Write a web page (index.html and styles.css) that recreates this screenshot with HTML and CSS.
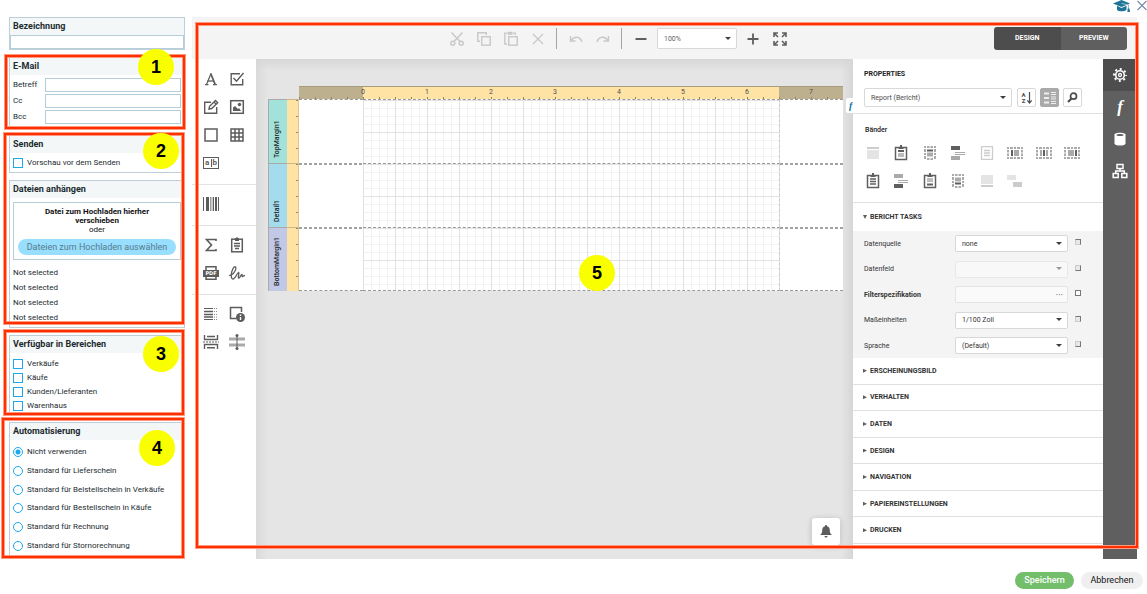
FILE: index.html
```html
<!DOCTYPE html>
<html lang="de">
<head>
<meta charset="utf-8">
<title>Berichtsdesigner</title>
<link rel="stylesheet" href="styles.css">
</head>
<body>
<header class="topbar">
  <button class="icon-btn help" aria-label="Hilfe"><svg width="18" height="13" viewBox="0 0 18 13"><path d="M0 3.500L8.500 0 17 3.500 8.500 7z" fill="#1f7396"/><path d="M4 5.800v4c1.500 2 7.500 2 9.500 0v-4L8.500 8z" fill="#1f7396"/><path d="M8.500 3.500l7 1.300V10" stroke="#8fc0d2" fill="none"/><path d="M14.700 8.500h1.800l.5 3.500h-2.600z" fill="#1f7396"/></svg></button>
  <button class="icon-btn" aria-label="Schließen"><svg width="10" height="11" viewBox="0 0 10 11"><path d="M.5 1l9 9M9.500 1l-9 9" stroke="#7890ad" stroke-width="1.200"/></svg></button>
</header>

<main class="main">
  <form class="sidebar">
    <section class="card">
      <h2><label for="name">Bezeichnung</label></h2>
      <input class="text-input" id="name" type="text">
    </section>

    <div class="group group-mail">
      <section class="card">
        <h2>E-Mail</h2>
        <div class="mail-fields">
          <label for="subject">Betreff</label><input class="text-input" id="subject" type="text">
          <label for="cc">Cc</label><input class="text-input" id="cc" type="text">
          <label for="bcc">Bcc</label><input class="text-input" id="bcc" type="text">
        </div>
      </section>
      <div class="mark"></div><span class="badge">1</span>
    </div>

    <div class="group group-send">
      <section class="card">
        <h2>Senden</h2>
        <div class="send-body"><label class="option"><input type="checkbox">Vorschau vor dem Senden</label></div>
      </section>
      <section class="card">
        <h2>Dateien anhängen</h2>
        <div class="files">
          <div class="dropzone">
            <strong>Datei zum Hochladen hierher verschieben</strong>
            <span>oder</span>
            <button type="button" class="upload">Dateien zum Hochladen auswählen</button>
          </div>
          <ul class="file-list"><li>Not selected</li><li>Not selected</li><li>Not selected</li><li>Not selected</li></ul>
        </div>
      </section>
      <div class="mark"></div><span class="badge">2</span>
    </div>

    <div class="group group-areas">
      <section class="card">
        <h2>Verfügbar in Bereichen</h2>
        <div class="areas">
          <label class="option"><input type="checkbox">Verkäufe</label>
          <label class="option"><input type="checkbox">Käufe</label>
          <label class="option"><input type="checkbox">Kunden/Lieferanten</label>
          <label class="option"><input type="checkbox">Warenhaus</label>
        </div>
      </section>
      <div class="mark"></div><span class="badge">3</span>
    </div>

    <div class="group group-auto">
      <section class="card">
        <h2>Automatisierung</h2>
        <div class="automation">
          <label class="option"><input type="radio" name="auto" checked>Nicht verwenden</label>
          <label class="option"><input type="radio" name="auto">Standard für Lieferschein</label>
          <label class="option"><input type="radio" name="auto">Standard für Belstellschein in Verkäufe</label>
          <label class="option"><input type="radio" name="auto">Standard für Bestellschein in Käufe</label>
          <label class="option"><input type="radio" name="auto">Standard für Rechnung</label>
          <label class="option"><input type="radio" name="auto">Standard für Stornorechnung</label>
        </div>
      </section>
      <div class="mark"></div><span class="badge">4</span>
    </div>
  </form>

  <section class="designer">
    <div class="toolbar">
      <div class="tools">
        <button class="icon-btn" aria-label="Ausschneiden"><svg width="14" height="14" viewBox="0 0 14 14" fill="none" stroke="currentColor" stroke-width="1.500"><path d="M1.500.5l8.500 9M12.500.5L4 9.500"/><circle cx="2.800" cy="11.200" r="2"/><circle cx="11.200" cy="11.200" r="2"/></svg></button>
        <button class="icon-btn" aria-label="Kopieren"><svg width="14" height="14" viewBox="0 0 14 14" fill="none" stroke="currentColor" stroke-width="1.400"><path d="M3 9.300H.8V.8h8.500V3"/><rect x="4.700" y="4.700" width="8.500" height="8.500"/></svg></button>
        <button class="icon-btn" aria-label="Einfügen"><svg width="14" height="15" viewBox="0 0 14 15" fill="none" stroke="currentColor" stroke-width="1.400"><path d="M3 13H.8V2.300h2M9 2.300h2.200V4"/><path d="M3.500 2.300h5" stroke-width="3"/><rect x="4.700" y="5.700" width="8.500" height="8.500"/></svg></button>
        <button class="icon-btn" aria-label="Löschen"><svg width="14" height="14" viewBox="0 0 14 14"><path d="M2 2l10 10M12 2L2 12" stroke="currentColor" stroke-width="1.300"/></svg></button>
      </div>
      <span class="sep"></span>
      <div class="tools">
        <button class="icon-btn" aria-label="Rückgängig"><svg width="14" height="14" viewBox="0 0 14 14" fill="none" stroke="currentColor" stroke-width="1.400"><path d="M1.500 4v5h5M2 8.500c3-4.500 9-4.500 11 1.500"/></svg></button>
        <button class="icon-btn" aria-label="Wiederholen"><svg width="14" height="14" viewBox="0 0 14 14" fill="none" stroke="currentColor" stroke-width="1.400"><path d="M12.500 4v5h-5M12 8.500c-3-4.500-9-4.500-11 1.500"/></svg></button>
      </div>
      <span class="sep"></span>
      <div class="zoom">
        <button class="icon-btn" aria-label="Verkleinern"><svg width="14" height="14" viewBox="0 0 14 14"><path d="M1.500 7h11" stroke="currentColor" stroke-width="2"/></svg></button>
        <span class="select zoom-select"><select aria-label="Zoom"><option>100%</option></select></span>
        <button class="icon-btn" aria-label="Vergrößern"><svg width="14" height="14" viewBox="0 0 14 14"><path d="M1.500 7h11M7 1.500v11" stroke="currentColor" stroke-width="1.800"/></svg></button>
      </div>
      <button class="icon-btn" aria-label="Vollbild"><svg width="14" height="14" viewBox="0 0 14 14" fill="none" stroke="currentColor" stroke-width="1.600"><path d="M1 5V1h4M9 1h4v4M13 9v4H9M5 13H1V9M1 1l4 4M13 1L9 5M13 13L9 9M1 13l4-4"/></svg></button>
      <div class="modes"><button class="active">DESIGN</button><button>PREVIEW</button></div>
    </div>

    <div class="workspace">
      <div class="toolbox">
        <div class="tool-group">
          <button class="icon-btn" aria-label="Text"><svg width="16" height="16" viewBox="0 0 16 16" fill="none" stroke="currentColor"><path d="M4.500 10h6.500" stroke-width="1.300"/><path d="M3.500 13.500L8 2.500" stroke-width="1.200"/><path d="M7.700 2.500l4.500 11" stroke-width="1.800"/><path d="M2 13.600h3.500M10 13.600h4" stroke-width="1.200"/></svg></button>
          <button class="icon-btn" aria-label="Kontrollkästchen"><svg width="16" height="16" viewBox="0 0 16 16" fill="none" stroke="currentColor" stroke-width="1.400"><path d="M11 2.700H2.200v11h11.500V8M4.500 7l3 3.300L14.500 2"/></svg></button>
          <button class="icon-btn" aria-label="Rich Text"><svg width="16" height="16" viewBox="0 0 16 16" fill="none" stroke="currentColor" stroke-width="1.400"><path d="M8 3.200H1.700v11h12V8"/><path d="M6 10l.6-2.700L12.500 1.500l2.200 2.200L8.700 9.500z M11 3l2.200 2.200"/></svg></button>
          <button class="icon-btn" aria-label="Bild"><svg width="16" height="16" viewBox="0 0 16 16"><rect x="1.700" y="1.700" width="12.600" height="12.600" fill="none" stroke="currentColor" stroke-width="1.500"/><path d="M4 12V8.500l2-1.500 3 3 1-1 2 3z" fill="currentColor"/><circle cx="10.500" cy="5.500" r="1.700" fill="currentColor"/></svg></button>
          <button class="icon-btn" aria-label="Panel"><svg width="16" height="16" viewBox="0 0 16 16"><rect x="2" y="2" width="12" height="12" fill="none" stroke="currentColor" stroke-width="1.500"/></svg></button>
          <button class="icon-btn" aria-label="Tabelle"><svg width="16" height="16" viewBox="0 0 16 16" fill="none" stroke="currentColor" stroke-width="1.500"><path d="M2 2h12v12H2zM6 2v12M10 2v12M2 6h12M2 10h12"/></svg></button>
          <button class="icon-btn comb" aria-label="Zeichenkamm"><span>a</span><span>b</span></button>
        </div>
        <div class="tool-group">
          <button class="icon-btn" aria-label="Barcode"><svg width="16" height="16" viewBox="0 0 16 16" fill="currentColor"><path d="M0 1h1v14H0zM3 1h3v14H3zM10 1h1v14h-1zM12 1h2v14h-2zM15 1h1v14h-1z"/><path d="M7 1h1v14H7zM8.500 1h1v14h-1z" opacity=".6"/></svg></button>
        </div>
        <div class="tool-group">
          <button class="icon-btn" aria-label="Summe"><svg width="16" height="16" viewBox="0 0 16 16" fill="none" stroke="currentColor" stroke-width="1.600"><path d="M13 4V2.500H3.500L8.500 8l-5 5.500H13V12"/></svg></button>
          <button class="icon-btn" aria-label="Unterbericht"><svg width="16" height="16" viewBox="0 0 16 16" fill="none" stroke="currentColor" stroke-width="1.500"><rect x="2.700" y="2.200" width="10.600" height="12.600"/><path d="M6 2.500h4M7.500 1h1" stroke-width="3"/><path d="M5 6.500h6M5 9h6M6 11.500h4"/></svg></button>
          <button class="icon-btn pdf" aria-label="PDF"><svg width="16" height="16" viewBox="0 0 16 16"><path d="M3 5V1.700h10V5M3 11v3.300h10V11" fill="none" stroke="currentColor" stroke-width="1.500"/></svg><span>PDF</span></button>
          <button class="icon-btn" aria-label="Signatur"><svg width="16" height="16" viewBox="0 0 16 16" fill="none" stroke="currentColor" stroke-width="1.300" stroke-linecap="round"><path d="M.7 10.500C4 10.500 8 4 6.500 2 5 .5 2.500 5.500 2.300 10c-.1 3 .7 4.300 2 4 2.500-.6 3.500-6 5.200-6.500 1.200-.2-1 5.500.2 5.700 1.300.2 2.300-4 3.200-3.800.7.300-.2 2.300.6 2.300.8 0 1.200-1.200 2-1.200"/></svg></button>
        </div>
        <div class="tool-group">
          <button class="icon-btn" aria-label="Inhaltsverzeichnis"><svg width="16" height="16" viewBox="0 0 16 16" fill="none" stroke="currentColor" stroke-width="1"><path d="M1 2.500h9M1 13.500h9"/><path d="M1 5.500h9M1 8.500h9M1 11h9" stroke-width="1.500"/><path d="M11 2.500h4M11 5.500h4M11 8.500h4M11 11h4M11 13.500h4" stroke-dasharray="1 1" opacity=".7"/></svg></button>
          <button class="icon-btn" aria-label="Seiteninfo"><svg width="16" height="16" viewBox="0 0 16 16"><path d="M7 12.500H1.500V1.500h11V6" fill="none" stroke="currentColor" stroke-width="1.500"/><circle cx="11.500" cy="11.500" r="4.500" fill="currentColor"/><path d="M11.500 8.500v1.500M11.500 11v3" stroke="#fff" stroke-width="1.400"/></svg></button>
          <button class="icon-btn" aria-label="Seitenumbruch"><svg width="16" height="16" viewBox="0 0 16 16" fill="none" stroke="currentColor" stroke-width="1.400"><path d="M1.500 1v4.500h13V1M4 2.500h8M1.500 15v-4.500h13V15M4 13.700h8"/><path d="M0 8h16" stroke-dasharray="2 1" stroke-width="1"/></svg></button>
          <button class="icon-btn" aria-label="Bandübergreifende Linie"><svg width="16" height="16" viewBox="0 0 16 16"><path d="M0 3.500h16v3H0zM0 9.500h16v3H0z" fill="#aaa"/><path d="M8 2v12" stroke="currentColor"/><circle cx="8" cy="1.500" r="1.500" fill="currentColor"/><circle cx="8" cy="14.500" r="1.500" fill="currentColor"/></svg></button>
        </div>
      </div>

      <div class="canvas">
        <div class="ruler">
          <div class="ruler-part outside"></div>
          <div class="ruler-part inside"><span>0</span><span>1</span><span>2</span><span>3</span><span>4</span><span>5</span><span>6</span></div>
          <div class="ruler-part outside rest"><span>7</span></div>
        </div>
        <div class="band top"><div class="band-name">TopMargin1</div><div class="band-ruler"></div><div class="page-margin"></div><div class="page-grid"></div><div class="page-rest"></div></div>
        <div class="band detail"><div class="band-name">Detail1</div><div class="band-ruler"></div><div class="page-margin"></div><div class="page-grid"></div><div class="page-rest"></div></div>
        <div class="band bottom"><div class="band-name">BottomMargin1</div><div class="band-ruler"></div><div class="page-margin"></div><div class="page-grid"></div><div class="page-rest"></div></div>
        <button class="fx" aria-label="Ausdruck">f</button>
        <button class="bell" aria-label="Benachrichtigungen"><svg width="12" height="13" viewBox="0 0 12 13" fill="#5c5c5c"><path d="M6 0c.8 0 1 .6 1 1.200 2 .5 2.800 2 2.800 4C9.800 7.500 10.300 8.500 12 10H0c1.700-1.500 2.200-2.500 2.200-4.800 0-2 .8-3.500 2.800-4C5 .6 5.200 0 6 0zM4.500 11h3c0 2-3 2-3 0z"/></svg></button>
      </div>

      <aside class="props">
        <div class="props-head">
          <h3>PROPERTIES</h3>
          <div class="props-tools">
            <span class="select object-select"><select aria-label="Element"><option>Report (Bericht)</option></select></span>
            <button class="square az" aria-label="Sortieren"><span>A<br>Z</span><svg width="5" height="12" viewBox="0 0 5 12" fill="none" stroke="currentColor"><path d="M2.500 0v11M.3 8.500l2.200 2.500 2.200-2.500" stroke-width="1.200"/></svg></button>
            <button class="square pressed" aria-label="Kategorien"><svg width="12" height="12" viewBox="0 0 12 12" fill="none" stroke="#eee"><path d="M0 1.500h5M0 6h5M0 10.500h5" stroke-width="2"/><path d="M7 .5h5M7 2.500h5M7 5h5M7 7h5M7 9.500h5M7 11.500h5"/></svg></button>
            <button class="square" aria-label="Suchen"><svg width="11" height="11" viewBox="0 0 11 11" fill="none" stroke="currentColor"><circle cx="6.500" cy="4.200" r="3" stroke-width="1.700"/><path d="M4.500 6.500l-3.500 3.500" stroke-width="2.200"/></svg></button>
          </div>
        </div>
        <div class="bands">
          <h4>Bänder</h4>
          <div class="band-icons">
            <svg viewBox="0 0 16 16"><path d="M2 2h12v2H2z" fill="#ccc"/><path d="M2 5h12v9H2z" fill="#e4e4e4"/></svg>
            <svg viewBox="0 0 16 16"><use href="#clip"/><path d="M5 5h6v2H5z" fill="#5f5f5f"/><path d="M5 8h6v4H5z" fill="#bbb"/></svg>
            <svg viewBox="0 0 16 16"><use href="#vband"/><path d="M5 4.500h6v2H5z" fill="#5f5f5f"/><path d="M5 7.500h6v4H5z" fill="#aaa"/></svg>
            <svg viewBox="0 0 16 16"><path d="M1 1h9v4H1z" fill="#5f5f5f"/><path d="M5 7h10v1H5zM5 9h10v1H5z" fill="#aaa"/><path d="M1 11h9v4H1z" fill="#aaa"/></svg>
            <svg viewBox="0 0 16 16" fill="none" stroke="#ccc" stroke-width="1.300"><path d="M2.500 1.700h11v12.600h-11zM5 5.500h6M5 8h6M5 10.500h6"/></svg>
            <svg viewBox="0 0 16 16"><use href="#hband"/><path d="M4 5h2v6H4z" fill="#5f5f5f"/><path d="M7 5h5v6H7z" fill="#aaa"/></svg>
            <svg viewBox="0 0 16 16"><use href="#hband"/><path d="M7 5h2v6H7z" fill="#5f5f5f"/><path d="M4 5h2v6H4zM10 5h2v6h-2z" fill="#aaa"/></svg>
            <svg viewBox="0 0 16 16"><use href="#hband"/><path d="M11 5h2v6h-2z" fill="#5f5f5f"/><path d="M4 5h6v6H4z" fill="#aaa"/></svg>
            <svg viewBox="0 0 16 16"><use href="#clip"/><path d="M5 6h6M5 8.500h6M5 11h6" stroke="#5f5f5f" stroke-width="1.300"/></svg>
            <svg viewBox="0 0 16 16"><path d="M1 1h9v4H1z" fill="#aaa"/><path d="M5 7h10v1H5zM5 9h10v1H5z" fill="#aaa"/><path d="M1 11h9v4H1z" fill="#5f5f5f"/></svg>
            <svg viewBox="0 0 16 16"><use href="#clip"/><path d="M5 5h6v4H5z" fill="#bbb"/><path d="M5 10.500h6v2H5z" fill="#5f5f5f"/></svg>
            <svg viewBox="0 0 16 16"><use href="#vband"/><path d="M5 9.500h6v2H5z" fill="#5f5f5f"/><path d="M5 4.500h6v4H5z" fill="#aaa"/></svg>
            <svg viewBox="0 0 16 16"><path d="M2 12h12v2H2z" fill="#ccc"/><path d="M2 2h12v9H2z" fill="#e4e4e4"/></svg>
            <svg viewBox="0 0 16 16"><path d="M0 2h9v5H0z" fill="#e4e4e4"/><path d="M6 9h9v5H6z" fill="#ccc"/></svg>
          </div>
          <svg class="defs" width="0" height="0"><defs>
            <g id="clip"><path d="M2.500 2.500h11v12h-11z" fill="none" stroke="#5f5f5f" stroke-width="1.500"/><path d="M5.500 3h5M7 1h2" stroke="#5f5f5f" stroke-width="2"/></g>
            <g id="vband" fill="none" stroke="#aaa" stroke-width="2"><path d="M3 1v14M13 1v14" stroke-dasharray="2 1 3 1"/><path d="M5 2h6M5 14h6" stroke-dasharray="2.500 1"/></g>
            <g id="hband" fill="none" stroke="#aaa" stroke-width="2"><path d="M0 3h16M0 13h16" stroke-dasharray="2 1 3 1"/><path d="M1 5v6M15 5v6" stroke-dasharray="2.500 1"/></g>
          </defs></svg>
        </div>
        <button class="acc-title open">BERICHT TASKS</button>
        <div class="tasks">
          <div class="task"><label for="src">Datenquelle</label><span class="select"><select id="src"><option>none</option></select></span><button class="mini" aria-label="Optionen"></button></div>
          <div class="task"><label for="fld">Datenfeld</label><span class="select off"><select id="fld" disabled></select></span><button class="mini" aria-label="Optionen"></button></div>
          <div class="task"><label class="strong" for="flt">Filterspezifikation</label><span class="more"><input id="flt" disabled><button aria-label="Mehr">···</button></span><button class="mini" aria-label="Optionen"></button></div>
          <div class="task"><label for="unit">Maßeinheiten</label><span class="select"><select id="unit"><option>1/100 Zoll</option></select></span><button class="mini" aria-label="Optionen"></button></div>
          <div class="task"><label for="lang">Sprache</label><span class="select"><select id="lang"><option>(Default)</option></select></span><button class="mini" aria-label="Optionen"></button></div>
        </div>
        <div class="accordion">
          <button class="acc-title">ERSCHEINUNGSBILD</button>
          <button class="acc-title">VERHALTEN</button>
          <button class="acc-title">DATEN</button>
          <button class="acc-title">DESIGN</button>
          <button class="acc-title">NAVIGATION</button>
          <button class="acc-title">PAPIEREINSTELLUNGEN</button>
          <button class="acc-title">DRUCKEN</button>
        </div>
      </aside>

      <nav class="rail">
        <button class="active" aria-label="Eigenschaften"><svg width="14" height="14" viewBox="0 0 14 14" fill="none" stroke="#fff"><circle cx="7" cy="7" r="4.300" stroke-width="1.600"/><circle cx="7" cy="7" r="1.500" stroke-width="1.300"/><circle cx="7" cy="7" r="6" stroke-width="2" stroke-dasharray="2 2.712" stroke-dashoffset="1"/></svg></button>
        <button class="func" aria-label="Ausdrücke">f</button>
        <button aria-label="Felder"><svg width="12" height="14" viewBox="0 0 12 14"><path d="M.5 2.500C.5 0 11.500 0 11.500 2.500v9c0 2.700-11 2.700-11 0z" fill="#fff"/><ellipse cx="6" cy="3" rx="3.500" ry="1" fill="#5f5f5f"/></svg></button>
        <button aria-label="Berichtsexplorer"><svg width="16" height="16" viewBox="0 0 16 16" fill="none" stroke="#fff" stroke-width="1.500"><path d="M5 1.500h6v4H5zM1.200 10.500h5v4h-5zM9.800 10.500h5v4h-5zM8 5.500V8M3.700 10.500V8h8.600v2.500"/></svg></button>
      </nav>
    </div>
    <div class="mark"></div><span class="badge">5</span>
  </section>
</main>

<footer class="actions"><button class="save">Speichern</button><button class="cancel">Abbrechen</button></footer>
</body>
</html>
```
FILE: styles.css
```css
* { box-sizing: border-box; }
body {
  margin: 0;
  min-height: 100vh;
  display: flex;
  flex-direction: column;
  background: #fff;
  color: #1c2b2f;
  font: 8px/10px Roboto, "Liberation Sans", sans-serif;
}
button, input, select { font: inherit; color: inherit; margin: 0; }
button { border: 0; padding: 0; background: none; cursor: pointer; }
h2, h3, h4, ul { margin: 0; padding: 0; list-style: none; }
svg { display: block; }
.icon-btn { display: flex; align-items: center; justify-content: center; }

.topbar { height: 17px; display: flex; justify-content: flex-end; align-items: flex-start; gap: 6px; }
.main { flex: 1; display: flex; gap: 7px; padding: 0 10px 0 9px; }

/* Sidebar */
.sidebar { flex: none; width: 176px; display: flex; flex-direction: column; gap: 7px; }
.group { position: relative; display: flex; flex-direction: column; gap: 7px; }
.card { border: 1px solid #bdd0da; }
.card h2 { height: 17px; padding-left: 3px; background: #f3f7f8; font-size: 9px; line-height: 17px; font-weight: 700; }
.text-input { display: block; width: 100%; height: 14px; padding: 0 3px; border: 1px solid #b5ced8; background: #fff; }
.mail-fields { display: grid; grid-template-columns: 32px 1fr; row-gap: 2px; align-items: center; padding: 3px; }
.option { display: flex; align-items: center; gap: 4px; }
.option input { appearance: none; flex: none; width: 10px; height: 10px; border: 1px solid #1ba9ec; background: #fff; }
.option input[type="radio"] { border-radius: 50%; }
.option input[type="radio"]:checked { background: radial-gradient(circle, #1ba9ec 0 2px, #fff 3px); }
.send-body { padding: 5px 3px 4px; }
.files { padding: 4px 3px 2px; }
.dropzone { height: 58px; border: 1px solid #b5ced8; display: flex; flex-direction: column; align-items: center; padding: 4px; line-height: 9px; text-align: center; color: #111; }
.dropzone strong { width: 120px; }
.upload { width: 158px; height: 16px; margin-top: 5px; border-radius: 8px; background: #97deff; color: #587b8b; font-size: 9px; white-space: nowrap; }
.file-list { padding-top: 5px; line-height: 15px; }
.areas { padding: 4px 3px 1px; }
.areas .option { height: 14px; }
.group-auto { flex: 1; }
.group-auto .card { flex: 1; display: flex; flex-direction: column; }
.automation { flex: 1; display: flex; flex-direction: column; padding: 3px; }
.automation .option { flex: 1; }

/* Numbered highlights */
.mark { position: absolute; border: 2px solid #ff3000; box-shadow: 0 0 0 1px #ff9a80, inset 0 0 0 1px #ff9a80; pointer-events: none; z-index: 5; }
.badge { position: absolute; z-index: 6; width: 36px; height: 36px; border-radius: 50%; background: #faff00; color: #000; font: 700 18px/36px "Liberation Sans", sans-serif; text-align: center; }
.group-mail .mark { inset: -2px 0 -1px -4px; }
.group-mail .badge { top: -8px; right: 11px; }
.group-send .mark { inset: -2px 1px 4px -5px; }
.group-send .badge { top: -2px; right: 6px; }
.group-areas .mark { inset: -5px 1px 0 -5px; }
.group-areas .badge { top: 1px; right: 6px; }
.group-auto .mark { inset: -4px 1px 1px -7px; }
.group-auto .badge { top: 8px; right: 10px; }
.designer > .mark { inset: 6px -1px 11px 4px; }
.designer > .badge { top: 238px; left: 387px; }

/* Designer */
.designer { position: relative; flex: 1; min-width: 0; display: flex; flex-direction: column; color: #4d4d4d; }
.toolbar { height: 42px; display: flex; align-items: center; padding: 1px 10px 0 258px; background: #f4f4f4; color: #5f5f5f; }
.tools { display: flex; gap: 13px; color: #c8c8c8; }
.sep { width: 1px; height: 21px; margin: 0 12px 0 11px; background: #a5a5a5; }
.zoom { display: flex; align-items: center; gap: 9px; margin-right: 13px; }
.modes { display: flex; width: 133px; margin-left: auto; border-radius: 3px; overflow: hidden; }
.modes button { flex: 1; height: 23px; padding-bottom: 2px; background: #5f5f5f; color: #fff; font-size: 7px; font-weight: 700; }
.modes .active { background: #4d4d4d; }
.select { position: relative; display: block; }
.select::after { content: ""; position: absolute; right: 6px; top: 50%; margin-top: -2px; border: 3px solid transparent; border-top-color: #404040; border-bottom: 0; pointer-events: none; }
.select select { appearance: none; display: block; width: 100%; height: 17px; padding: 0 6px; border: 1px solid #d8d8d8; border-radius: 2px; background: #fff; }
.zoom-select { width: 80px; }
.zoom-select select { height: 21px; font-size: 7px; }
.workspace { flex: 1; display: flex; min-height: 0; }

.toolbox { width: 64px; background: #fff; color: #5c5c5c; }
.tool-group { display: grid; grid-template-columns: 16px 16px; grid-auto-rows: 16px; gap: 12px 10px; padding: 12px 11px 13px; border-bottom: 1px solid #e3e3e3; }
.tool-group + .tool-group { padding-top: 11px; }
.tool-group:last-child { border: 0; }
.comb { align-self: center; height: 12px; border: 1px solid #5c5c5c; font-size: 8px; font-weight: 700; line-height: 8px; }
.comb span { flex: 1; }
.comb span + span { border-left: 1px solid #5c5c5c; }
.pdf { position: relative; }
.pdf span { position: absolute; left: 0; right: 0; top: 5px; height: 7px; background: #5c5c5c; color: #fff; font: 700 5px/7px "DejaVu Sans", sans-serif; }

.canvas { position: relative; overflow: hidden; flex: 1; min-width: 0; padding: 27px 10px 0 12px; background: linear-gradient(#d7d7d7, #e5e5e500 12px), linear-gradient(90deg, #dadada, #e5e5e5 12px, #e5e5e5 calc(100% - 12px), #d6d6d6); }
.ruler { display: flex; height: 13px; margin-left: 31px; }
.ruler-part { display: flex; border-top: 1px solid #a79c80; background: repeating-linear-gradient(90deg, #8e8672 0 1px, transparent 1px 16px) 0 100% / 100% 2px no-repeat; font-size: 7px; line-height: 11px; }
.ruler-part span { flex: none; width: 64px; margin-left: -32px; margin-right: 32px; text-align: center; }
.outside { width: 64px; background-color: #bcb08f; }
.inside { width: 416px; background-color: #ffe3a5; }
.rest { flex: 1; min-width: 0; }
.rest span { margin: 0; }
.band { display: flex; height: 64px; }
.band-name { width: 19px; padding-top: 5px; border: solid #aaa; border-width: 0 1px 1px 0; writing-mode: vertical-rl; transform: rotate(180deg); line-height: 17px; font-size: 7px; font-weight: 500; color: #222; }
.top .band-name { background: #a3e2da; }
.detail .band-name { background: #a4dcee; }
.bottom .band-name { background: #c1c9e6; }
.band-ruler { width: 12px; border-right: 1px solid #e0c68c; border-top: 1px solid #cbb68a; background: repeating-linear-gradient(#8e8672 0 1px, transparent 1px 16px) 100% 0 / 2px 100% no-repeat #ffe3a5; }
.page-margin, .page-grid, .page-rest { background-color: #fff; border-top: 1px dashed #999; }
.detail .page-margin, .detail .page-rest, .bottom .page-margin, .bottom .page-rest {
  border-top: 0;
  background: repeating-linear-gradient(90deg, #a3a3a3 0 3px, #fff 3px 5px) 0 0 / 100% 2px no-repeat #fff;
}
.bottom .page-margin, .bottom .page-grid, .bottom .page-rest { border-bottom: 1px dashed #999; }
.page-margin { width: 64px; }
.page-grid {
  width: 417px;
  border-right: 1px dashed #ccc;
  background-image: linear-gradient(90deg, #e2e2e2 1px, transparent 1px), linear-gradient(#e2e2e2 1px, transparent 1px), linear-gradient(90deg, #f2f2f2 1px, transparent 1px), linear-gradient(#f2f2f2 1px, transparent 1px);
  background-size: 32px 32px, 32px 32px, 8px 8px, 8px 8px;
}
.page-rest { flex: 1; }
.fx { position: absolute; top: 39px; right: -8px; width: 15px; height: 15px; padding-left: 3px; border-radius: 2px; background: #fff; color: #0879a8; font: italic 700 10px/14px "Liberation Serif", serif; text-align: left; }
.bell { position: absolute; right: 13px; bottom: 14px; width: 28px; height: 27px; display: flex; align-items: center; justify-content: center; border-radius: 3px; background: #fff; box-shadow: 0 1px 6px #0003; }

/* Properties */
.props { width: 250px; display: flex; flex-direction: column; padding-bottom: 15px; background: #fff; }
.props-head { height: 55px; padding: 9px 11px 0; border-bottom: 1px solid #e0e0e0; }
.props h3 { padding-bottom: 8px; font-size: 7px; line-height: 12px; color: #222; }
.props-tools { display: flex; gap: 4px; }
.object-select { width: 148px; margin-right: 1px; }
.object-select select { height: 19px; font-size: 7px; }
.square { width: 19px; height: 19px; display: flex; align-items: center; justify-content: center; border: 1px solid #d8d8d8; border-radius: 2px; background: #fff; color: #4d4d4d; }
.az { gap: 1px; font-size: 6px; font-weight: 700; line-height: 6px; }
.square.pressed { background: #aaa; border-color: #aaa; }
.bands { height: 89px; padding: 10px 12px 0; border-bottom: 1px solid #e0e0e0; }
.bands h4 { padding-bottom: 9px; font-size: 7px; line-height: 12px; font-weight: 500; color: #222; }
.band-icons { display: grid; grid-template-columns: repeat(8, 16px); justify-content: space-between; row-gap: 12px; width: 215px; }
.band-icons svg { width: 16px; height: 16px; }
.defs { position: absolute; }
.acc-title { display: flex; align-items: center; padding-left: 10px; gap: 3px; font-size: 7px; line-height: 10px; font-weight: 700; color: #333; text-align: left; }
.acc-title::before { content: ""; width: 4px; height: 4px; background: #5f5f5f; clip-path: polygon(0 0, 100% 50%, 0 100%); }
.acc-title.open::before { clip-path: polygon(0 0, 100% 0, 50% 100%); }
.acc-title.open { height: 28px; }
.tasks { height: 127px; padding: 4px 22px 4px 11px; display: flex; flex-direction: column; justify-content: space-between; background: #f4f4f4; color: #333; font-size: 7px; }
.task { display: grid; grid-template-columns: 91px 113px 13px; align-items: center; }
.task .mini { justify-self: end; }
.task > label { font-weight: 400; }
.task > .strong { font-weight: 700; }
.select.off::after { border-top-color: #999; }
.select.off select { background: #fafafa; border-color: #e4e4e4; }
.more { position: relative; }
.more input { display: block; width: 100%; height: 17px; border: 1px solid #e4e4e4; border-radius: 2px; background: #fafafa; }
.more button { position: absolute; right: 5px; top: 0; line-height: 17px; font-size: 8px; font-weight: 700; color: #888; }
.mini { width: 6px; height: 6px; margin-bottom: 3px; background: #e8e8e8; border: 1px solid #777; border-left-color: #ccc; border-bottom-color: #ccc; }
.task:nth-child(2) .mini, .task:last-child .mini { border-color: #ccc #777 #777 #ccc; }
.task:nth-child(3) .mini { border-color: #777; background: #fff; }
.accordion { flex: 1; display: flex; flex-direction: column; }
.accordion .acc-title { flex: 1; border-bottom: 1px solid #e0e0e0; }

.rail { width: 34px; background: #5f5f5f; }
.rail button { width: 34px; height: 32px; display: flex; align-items: center; justify-content: center; color: #fff; }
.rail .active { background: #4d4d4d; }
.rail .func { font: italic 700 17px/20px "Liberation Serif", serif; }

.actions { height: 35px; display: flex; justify-content: flex-end; align-items: center; gap: 7px; padding: 8px 4px 0 0; }
.actions button { height: 17px; border-radius: 9px; font-size: 9px; line-height: 17px; }
.actions .save { width: 59px; background: #72be6a; color: #fff; font-weight: 500; }
.actions .cancel { width: 62px; background: #efefef; color: #111; }
```
